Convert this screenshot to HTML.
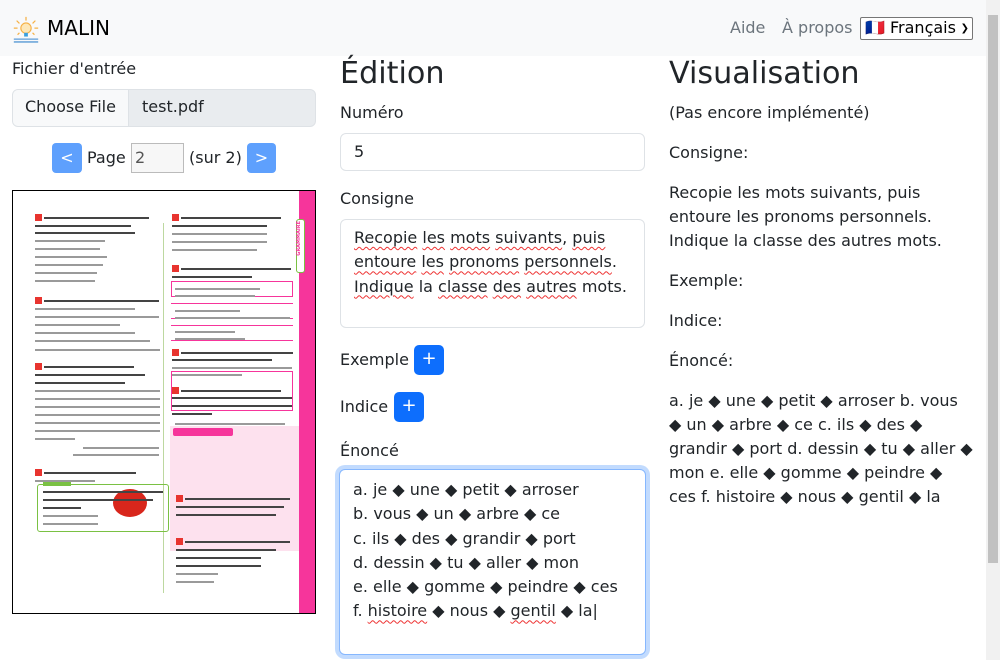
<!DOCTYPE html>
<html><head><meta charset="utf-8">
<style>
*{box-sizing:border-box;margin:0;padding:0}
body{width:1000px;height:660px;overflow:hidden;font-family:"DejaVu Sans","Liberation Sans",sans-serif;color:#212529;background:#fff;position:relative;font-size:16px}
.nav{position:absolute;left:0;top:0;width:986px;height:56px;background:#f8f9fa}
.brand{position:absolute;left:47px;top:16px;font-size:20px;color:#000}
.navl{position:absolute;top:18px;font-size:16px;color:#6c757d}
.sel{position:absolute;left:860px;top:17px;width:113px;height:23px;border:1px solid #767676;border-radius:2px;background:#fff;font-size:16px;padding-left:4px;line-height:20px;color:#000}
.sb{position:absolute;left:986px;top:0;width:14px;height:660px;background:#f1f1f1}
.sb div{position:absolute;left:2px;top:15px;width:10px;height:548px;background:#c1c1c1}
.abs{position:absolute}
.lbl{position:absolute;font-size:16px}
h2{position:absolute;font-size:30.2px;font-weight:400}
.inp{position:absolute;border:1px solid #dee2e6;border-radius:6px;background:#fff}
.btn{position:absolute;width:30px;height:30px;background:#0d6efd;border-radius:5px;color:#fff;text-align:center;line-height:28px;font-size:18px}
.ta{padding:6px 13px;line-height:24.3px;font-size:16px}
.sq{text-decoration:underline wavy #e33;text-decoration-thickness:1px;text-underline-offset:3px}
.pdf{position:absolute;left:12px;top:190px;width:304px;height:424px;border:1px solid #000;background:#fff;overflow:hidden}
.l{position:absolute;height:2px;background:#9a9a9a}
.b{position:absolute;height:2px;background:#444}
.n{position:absolute;width:7px;height:7px;background:#e8342f}
</style></head><body>
<div class="nav">
<svg class="abs" style="left:11px;top:15px" width="30" height="30" viewBox="0 0 32 32">
<g stroke="#f6b043" stroke-width="1.3"><line x1="16" y1="2" x2="16" y2="6"/><line x1="6" y1="6" x2="9" y2="9"/><line x1="26" y1="6" x2="23" y2="9"/><line x1="3" y1="14" x2="7" y2="14"/><line x1="29" y1="14" x2="25" y2="14"/><line x1="7" y1="21" x2="9" y2="19"/><line x1="25" y1="21" x2="23" y2="19"/></g>
<circle cx="16" cy="14" r="5.5" fill="#fde7b8" stroke="#f6b043" stroke-width="1.2"/>
<rect x="14" y="19" width="4" height="4" fill="#3aa0e0"/>
<rect x="3" y="25" width="26" height="1.5" fill="#6fa8dc"/><rect x="3" y="28" width="26" height="1.5" fill="#5b9bd5"/>
</svg>
<div class="brand">MALIN</div>
<div class="navl" style="left:730px">Aide</div>
<div class="navl" style="left:782px">À propos</div>
<div class="sel">🇫🇷 Français <span style="font-size:10px;position:absolute;right:3px;top:1px">❯</span></div>
</div>
<div class="sb"><div></div></div>

<!-- col1 -->
<div class="lbl" style="left:12px;top:59px">Fichier d'entrée</div>
<div class="inp" style="left:12px;top:89px;width:304px;height:38px;background:#e9ecef;overflow:hidden">
<div class="abs" style="left:0;top:0;width:116px;height:36px;background:#f8f9fa;border-right:1px solid #dee2e6;padding:7px 12px">Choose File</div>
<div class="abs" style="left:129px;top:7px">test.pdf</div></div>
<div class="abs" style="left:52px;top:143px;width:30px;height:30px;background:#5ea0fd;border-radius:4px;color:#fff;text-align:center;line-height:30px">&lt;</div>
<div class="lbl" style="left:87px;top:148px">Page</div>
<div class="abs" style="left:131px;top:143px;width:53px;height:30px;border:1px solid #bbb;background:#f7f7f7;padding:4px 3px;color:#555">2</div>
<div class="lbl" style="left:189px;top:148px">(sur 2)</div>
<div class="abs" style="left:247px;top:143px;width:29px;height:30px;background:#5ea0fd;border-radius:4px;color:#fff;text-align:center;line-height:30px">&gt;</div>

<div class="pdf">
<div class="abs" style="left:286px;top:0;width:18px;height:424px;background:#f6359b"></div>
<div class="abs" style="left:283px;top:28px;width:9px;height:54px;background:#fff;border:1px solid #7ac143;border-radius:3px"></div>
<div class="abs" style="left:283px;top:30px;width:8px;font-size:5px;color:#f6359b;writing-mode:vertical-rl;transform:rotate(180deg);font-weight:bold">GRAMMAIRE</div>
<div class="abs" style="left:150px;top:32px;width:1px;height:370px;background:#bdd8a0"></div>
<div class="abs" style="left:157px;top:235px;width:129px;height:125px;background:#fde1ee"></div>
<div class="abs" style="left:24px;top:293px;width:132px;height:48px;border:1.5px solid #7ac143;border-radius:3px"></div>
<div class="abs" style="left:30px;top:289px;width:28px;height:6px;background:#7ac143"></div>
<div class="abs" style="left:100px;top:298px;width:34px;height:28px;border-radius:50%;background:#d8261c"></div>
<div class="abs" style="left:160px;top:237px;width:60px;height:8px;background:#f6359b;border-radius:2px"></div>
<div class="abs" style="left:158px;top:180px;width:122px;height:40px;border:1px solid #f6359b"></div>
<div class="abs" style="left:158px;top:90px;width:122px;height:16px;border:1px solid #f6359b"></div>
<div class="abs" style="left:158px;top:112px;width:122px;height:16px;border-top:1px solid #f6359b;border-bottom:1px solid #f6359b"></div>
<div class="abs" style="left:158px;top:134px;width:122px;height:16px;border-top:1px solid #f6359b;border-bottom:1px solid #f6359b"></div>
<div class="n" style="left:22px;top:23px"></div>
<div class="b" style="left:31px;top:26px;width:105px"></div><div class="b" style="left:22px;top:34px;width:96px"></div><div class="b" style="left:22px;top:41px;width:100px"></div>
<div class="l" style="left:22px;top:49px;width:70px"></div><div class="l" style="left:22px;top:57px;width:65px"></div><div class="l" style="left:22px;top:65px;width:72px"></div><div class="l" style="left:22px;top:73px;width:68px"></div><div class="l" style="left:22px;top:81px;width:62px"></div><div class="l" style="left:22px;top:89px;width:60px"></div>
<div class="n" style="left:22px;top:106px"></div>
<div class="b" style="left:31px;top:109px;width:115px"></div>
<div class="l" style="left:22px;top:117px;width:100px"></div><div class="l" style="left:22px;top:125px;width:124px"></div><div class="l" style="left:22px;top:133px;width:85px"></div><div class="l" style="left:22px;top:141px;width:100px"></div><div class="l" style="left:22px;top:149px;width:115px"></div><div class="l" style="left:22px;top:158px;width:125px"></div>
<div class="n" style="left:22px;top:172px"></div>
<div class="b" style="left:31px;top:175px;width:90px"></div><div class="b" style="left:22px;top:183px;width:110px"></div><div class="b" style="left:22px;top:191px;width:90px"></div>
<div class="l" style="left:22px;top:199px;width:125px"></div><div class="l" style="left:22px;top:207px;width:125px"></div><div class="l" style="left:22px;top:215px;width:125px"></div><div class="l" style="left:22px;top:223px;width:125px"></div><div class="l" style="left:22px;top:231px;width:125px"></div><div class="l" style="left:22px;top:239px;width:125px"></div><div class="l" style="left:22px;top:247px;width:40px"></div>
<div class="l" style="left:70px;top:256px;width:76px"></div><div class="l" style="left:60px;top:263px;width:86px"></div>
<div class="n" style="left:22px;top:278px"></div>
<div class="b" style="left:31px;top:281px;width:92px"></div>
<div class="l" style="left:22px;top:289px;width:60px"></div>
<div class="b" style="left:30px;top:300px;width:120px"></div><div class="b" style="left:30px;top:308px;width:110px"></div><div class="b" style="left:30px;top:316px;width:38px"></div>
<div class="l" style="left:30px;top:324px;width:55px"></div><div class="l" style="left:30px;top:332px;width:55px"></div>
<div class="n" style="left:159px;top:23px"></div>
<div class="b" style="left:168px;top:26px;width:100px"></div><div class="b" style="left:159px;top:34px;width:95px"></div>
<div class="l" style="left:159px;top:42px;width:95px"></div><div class="l" style="left:159px;top:50px;width:95px"></div><div class="l" style="left:159px;top:58px;width:85px"></div>
<div class="n" style="left:159px;top:74px"></div>
<div class="b" style="left:168px;top:77px;width:110px"></div><div class="b" style="left:159px;top:85px;width:80px"></div>
<div class="l" style="left:162px;top:97px;width:85px"></div><div class="l" style="left:162px;top:104px;width:80px"></div><div class="l" style="left:162px;top:119px;width:65px"></div><div class="l" style="left:162px;top:126px;width:115px"></div><div class="l" style="left:162px;top:140px;width:60px"></div><div class="l" style="left:162px;top:147px;width:70px"></div>
<div class="n" style="left:159px;top:158px"></div>
<div class="b" style="left:168px;top:161px;width:112px"></div><div class="b" style="left:159px;top:168px;width:100px"></div>
<div class="l" style="left:159px;top:176px;width:120px"></div><div class="l" style="left:159px;top:183px;width:70px"></div>
<div class="n" style="left:159px;top:196px"></div>
<div class="b" style="left:168px;top:199px;width:100px"></div><div class="b" style="left:159px;top:206px;width:120px"></div><div class="b" style="left:159px;top:214px;width:120px"></div><div class="b" style="left:159px;top:222px;width:40px"></div>
<div class="l" style="left:162px;top:232px;width:110px"></div>
<div class="n" style="left:163px;top:304px"></div>
<div class="b" style="left:172px;top:307px;width:105px"></div><div class="b" style="left:163px;top:315px;width:108px"></div><div class="b" style="left:163px;top:323px;width:100px"></div>
<div class="n" style="left:163px;top:347px"></div>
<div class="b" style="left:172px;top:350px;width:105px"></div><div class="b" style="left:163px;top:358px;width:100px"></div><div class="b" style="left:163px;top:366px;width:85px"></div><div class="b" style="left:163px;top:374px;width:85px"></div>
<div class="l" style="left:163px;top:382px;width:42px"></div><div class="l" style="left:163px;top:390px;width:38px"></div>
</div>

<!-- col2 -->
<h2 style="left:340px;top:56px">Édition</h2>
<div class="lbl" style="left:340px;top:103px">Numéro</div>
<div class="inp ta" style="left:340px;top:133px;width:305px;height:38px">5</div>
<div class="lbl" style="left:340px;top:189px">Consigne</div>
<div class="inp ta" style="left:340px;top:219px;width:305px;height:109px"><span class="sq">Recopie</span> <span class="sq">les</span> <span class="sq">mots</span> <span class="sq">suivants</span>, <span class="sq">puis</span> <span class="sq">entoure</span> <span class="sq">les</span> <span class="sq">pronoms</span> <span class="sq">personnels</span>. <span class="sq">Indique</span> la <span class="sq">classe</span> <span class="sq">des</span> <span class="sq">autres</span> mots.</div>
<div class="lbl" style="left:340px;top:350px">Exemple</div>
<div class="btn" style="left:414px;top:345px">+</div>
<div class="lbl" style="left:340px;top:397px">Indice</div>
<div class="btn" style="left:394px;top:392px">+</div>
<div class="lbl" style="left:340px;top:441px">Énoncé</div>
<div class="inp ta" style="left:339px;top:469px;width:307px;height:186px;border:1px solid #86b7fe;box-shadow:0 0 0 4px #c2dbfe;padding-top:8px">a. je ◆ une ◆ petit ◆ arroser<br>b. vous ◆ un ◆ arbre ◆ ce<br>c. ils ◆ des ◆ grandir ◆ port<br>d. dessin ◆ tu ◆ aller ◆ mon<br>e. elle ◆ gomme ◆ peindre ◆ ces<br>f. <span class="sq">histoire</span> ◆ nous ◆ <span class="sq">gentil</span> ◆ la|</div>

<!-- col3 -->
<h2 style="left:669px;top:56px">Visualisation</h2>
<div class="lbl" style="left:669px;top:103px">(Pas encore implémenté)</div>
<div class="lbl" style="left:669px;top:143px">Consigne:</div>
<div class="lbl" style="left:669px;top:181px;width:305px;line-height:24px">Recopie les mots suivants, puis entoure les pronoms personnels. Indique la classe des autres mots.</div>
<div class="lbl" style="left:669px;top:271px">Exemple:</div>
<div class="lbl" style="left:669px;top:311px">Indice:</div>
<div class="lbl" style="left:669px;top:351px">Énoncé:</div>
<div class="lbl" style="left:669px;top:389px;width:305px;line-height:24px">a. je ◆ une ◆ petit ◆ arroser b. vous ◆ un ◆ arbre ◆ ce c. ils ◆ des ◆ grandir ◆ port d. dessin ◆ tu ◆ aller ◆ mon e. elle ◆ gomme ◆ peindre ◆ ces f. histoire ◆ nous ◆ gentil ◆ la</div>
</body></html>
